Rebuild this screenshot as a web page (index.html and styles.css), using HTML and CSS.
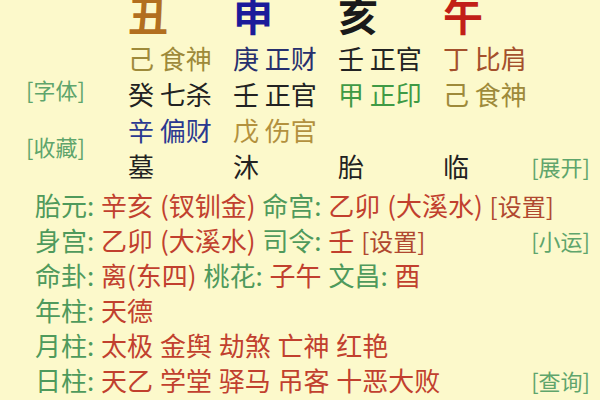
FILE: index.html
```html
<!DOCTYPE html>
<html lang="zh">
<head>
<meta charset="utf-8">
<link rel="stylesheet" href="styles.css">
</head>
<body>
<div class="page">
  <div class="top">
    <div class="side">
      <span class="link">[字体]</span>
      <span class="link">[收藏]</span>
    </div>
    <div class="grid">
      <div class="big c-chou">丑</div>
      <div class="big c-shen">申</div>
      <div class="big c-hai">亥</div>
      <div class="big c-wu">午</div>

      <div class="cell gold">己 食神</div>
      <div class="cell navy">庚 正财</div>
      <div class="cell dark">壬 正官</div>
      <div class="cell brown">丁 比肩</div>

      <div class="cell dark">癸 七杀</div>
      <div class="cell dark">壬 正官</div>
      <div class="cell green">甲 正印</div>
      <div class="cell gold">己 食神</div>

      <div class="cell blue">辛 偏财</div>
      <div class="cell gold2">戊 伤官</div>
      <div class="cell"></div>
      <div class="cell"></div>

      <div class="cell dark">墓</div>
      <div class="cell dark">沐</div>
      <div class="cell dark">胎</div>
      <div class="cell dark split"><span>临</span><span class="link">[展开]</span></div>
    </div>
  </div>
  <div class="info">
    <div class="line"><span><span class="k">胎元:</span> <span class="v">辛亥 (钗钏金)</span> <span class="k">命宫:</span> <span class="v">乙卯 (大溪水)</span> <span class="set">[设置]</span></span></div>
    <div class="line"><span><span class="k">身宫:</span> <span class="v">乙卯 (大溪水)</span> <span class="k">司令:</span> <span class="v">壬</span> <span class="set">[设置]</span></span><span class="link">[小运]</span></div>
    <div class="line"><span><span class="k">命卦:</span> <span class="v">离(东四)</span> <span class="k">桃花:</span> <span class="v">子午</span> <span class="k">文昌:</span> <span class="v">酉</span></span></div>
    <div class="line"><span><span class="k">年柱:</span> <span class="v">天德</span></span></div>
    <div class="line"><span><span class="k">月柱:</span> <span class="v">太极 金舆 劫煞 亡神 红艳</span></span></div>
    <div class="line"><span><span class="k">日柱:</span> <span class="v">天乙 学堂 驿马 吊客 十恶大败</span></span><span class="link">[查询]</span></div>
  </div>
</div>
</body>
</html>
```

FILE: styles.css
```css
html, body {
  margin: 0;
  padding: 0;
  background: #fcf9cb;
}
body {
  width: 600px;
  height: 400px;
  overflow: hidden;
  font-family: "Noto Sans CJK SC", "Noto Sans", sans-serif;
  font-size: 26px;
}
.page {
  width: 600px;
}
.top {
  display: flex;
  margin-top: -8px;
}
.side {
  flex: 0 0 128px;
  box-sizing: border-box;
  padding-left: 26px;
  padding-top: 84px;
  display: flex;
  flex-direction: column;
  align-items: flex-start;
  gap: 31px;
}
.link {
  color: #5fa56c;
  font-size: 22px;
  line-height: 26px;
}
.grid {
  flex: 1 1 auto;
  min-width: 0;
  display: grid;
  grid-template-columns: 105px 105px 105px minmax(0, 1fr);
  grid-auto-rows: 36px;
  grid-template-rows: 48px;
  padding-right: 10px;
}
.big {
  font-size: 40px;
  font-weight: bold;
  line-height: 44px;
}
.cell {
  line-height: 36px;
  white-space: nowrap;
}
.split {
  display: flex;
  justify-content: space-between;
  align-items: center;
}
.c-chou { color: #b26f1f; }
.c-shen { color: #1b1b9a; }
.c-hai { color: #1a1a1a; }
.c-wu { color: #c21f17; }
.gold { color: #9e8a3a; }
.gold2 { color: #b3913e; }
.navy { color: #27306e; }
.dark { color: #222222; }
.brown { color: #a4502c; }
.green { color: #3f9a45; }
.blue { color: #2a3890; }
.info {
  margin-top: 3px;
  padding-left: 35px;
  padding-right: 10px;
}
.line {
  display: flex;
  justify-content: space-between;
  align-items: center;
  height: 35px;
  line-height: 35px;
  white-space: nowrap;
  word-spacing: 1px;
}
.k { color: #4f9a5c; }
.v { color: #c1402e; }
.set { color: #b0482f; font-size: 24px; }
```
